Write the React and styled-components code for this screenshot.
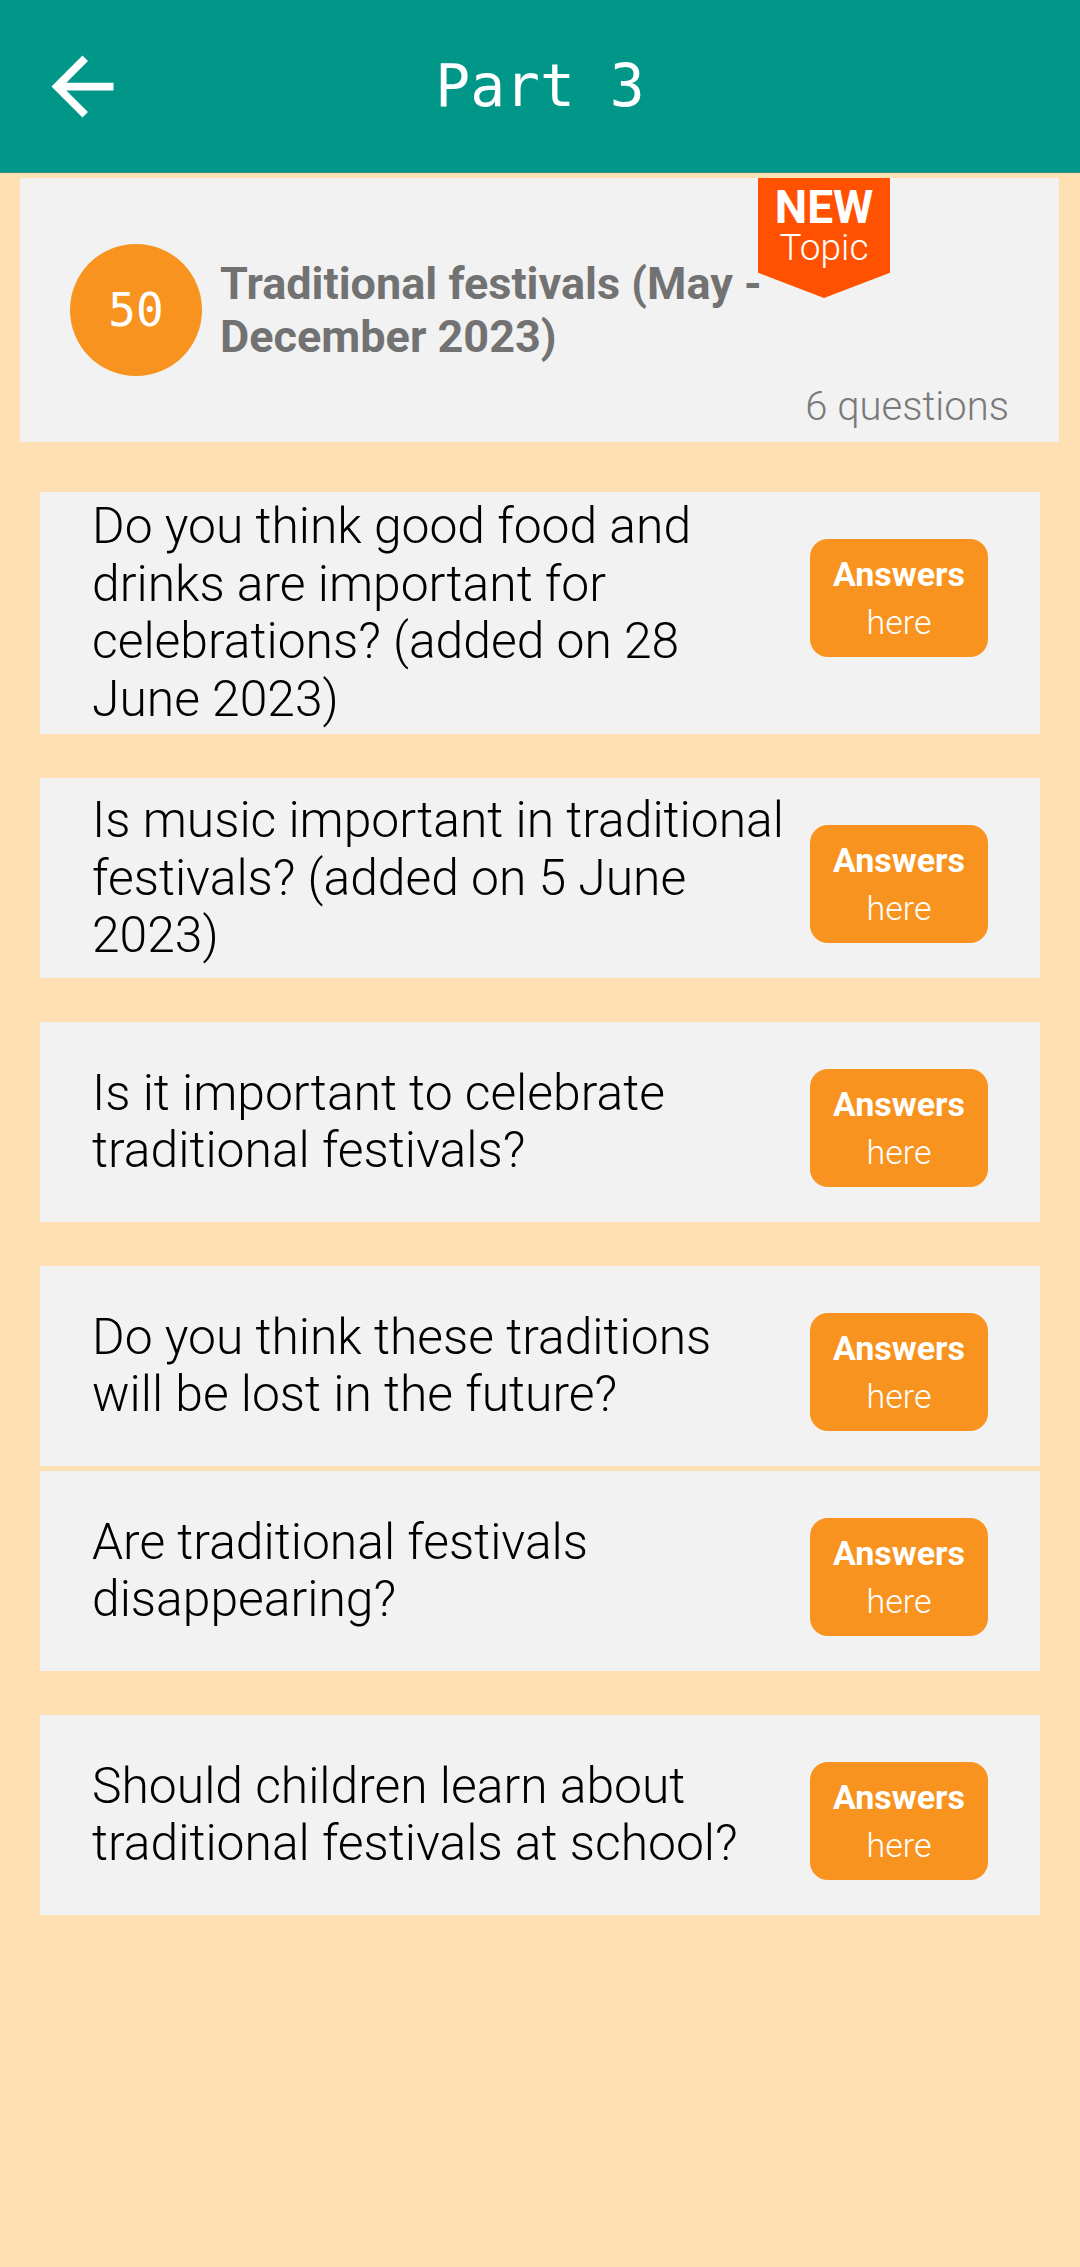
import React from "react";
import styled, { createGlobalStyle } from "styled-components";

const GlobalStyle = createGlobalStyle`
  body {
    margin: 0;
    background-color: #ffe0b2;
    font-family: Roboto, "Noto Sans", sans-serif;
  }
`;

const Page = styled.div`
  min-height: 2267px;
  background-color: #ffe0b2;
  display: flex;
  flex-direction: column;
`;

const Header = styled.header`
  height: 172px;
  background-color: #009688;
  border-bottom: 1px solid #3a8a7d;
  display: grid;
  grid-template-columns: 170px 1fr 170px;
  align-items: center;
`;

const BackButton = styled.button`
  background: none;
  border: none;
  padding: 0;
  margin-left: 36px;
  width: 93px;
  height: 93px;
  display: flex;
  cursor: pointer;
`;

const Title = styled.h1`
  margin: 0;
  text-align: center;
  color: #ffffff;
  font-family: "DejaVu Sans Mono", monospace;
  font-weight: 400;
  font-size: 58px;
`;

const Content = styled.main`
  display: flex;
  flex-direction: column;
  padding-top: 5px;
`;

const TopicCard = styled.section`
  position: relative;
  margin: 0 21px 0 20px;
  height: 264px;
  background-color: #f2f2f2;
  display: flex;
  align-items: center;
  padding-left: 50px;
  gap: 18px;
`;

const NumberCircle = styled.div`
  width: 132px;
  height: 132px;
  flex-shrink: 0;
  border-radius: 50%;
  background-color: #f7931e;
  color: #ffffff;
  display: flex;
  align-items: center;
  justify-content: center;
  font-family: "DejaVu Sans Mono", monospace;
  font-size: 46px;
`;

const TopicTitle = styled.h2`
  margin: 0;
  max-width: 560px;
  color: #727272;
  font-family: Roboto, sans-serif;
  font-weight: 700;
  font-size: 45px;
  line-height: 53px;
`;

const NewBadge = styled.div`
  position: absolute;
  top: 0;
  left: 738px;
  width: 132px;
  height: 120px;
  background-color: #ff5100;
  clip-path: polygon(0 0, 100% 0, 100% 79%, 50% 100%, 0 79%);
  display: flex;
  flex-direction: column;
  align-items: center;
  padding-top: 7px;
  box-sizing: border-box;
  color: #ffffff;
  font-family: Roboto, sans-serif;
`;

const BadgeStrong = styled.span`
  font-size: 46px;
  line-height: 45px;
  font-weight: 700;
`;

const BadgeLight = styled.span`
  font-size: 37px;
  line-height: 36px;
  font-weight: 300;
`;

const QuestionCount = styled.span`
  position: absolute;
  right: 50px;
  bottom: 12px;
  color: #7a7a7a;
  font-family: Roboto, sans-serif;
  font-weight: 300;
  font-size: 40px;
`;

const QuestionList = styled.div`
  display: flex;
  flex-direction: column;
  padding-top: 50px;
`;

const QuestionCard = styled.article`
  margin: ${(props) => (props.tight ? "5px" : "44px")} 40px 0;
  &:first-child {
    margin-top: 0;
  }
  min-height: 200px;
  box-sizing: border-box;
  background-color: #f2f2f2;
  display: flex;
  align-items: center;
  padding: 6px 52px;
  gap: 25px;
`;

const QuestionText = styled.p`
  flex: 1;
  margin: 0;
  color: #000000;
  font-family: Roboto, sans-serif;
  font-weight: 300;
  font-size: 49.8px;
  line-height: 57.6px;
`;

const AnswerButton = styled.button`
  align-self: flex-start;
  margin-top: 41px;
  flex-shrink: 0;
  width: 178px;
  height: 118px;
  border: none;
  border-radius: 18px;
  background-color: #f7931e;
  color: #ffffff;
  display: flex;
  flex-direction: column;
  align-items: center;
  justify-content: center;
  font-family: Roboto, sans-serif;
  font-size: 34px;
  line-height: 48px;
  cursor: pointer;
`;

const AnswerStrong = styled.span`
  font-weight: 700;
`;

const AnswerLight = styled.span`
  font-weight: 300;
`;

const ArrowBack = () => (
  <svg width="93" height="93" viewBox="0 0 24 24" fill="#ffffff">
    <path d="M20 11H7.83l5.59-5.59L12 4l-8 8 8 8 1.41-1.41L7.83 13H20v-2z" />
  </svg>
);

const questions = [
  {
    text: "Do you think good food and drinks are important for celebrations? (added on 28 June 2023)",
  },
  {
    text: "Is music important in traditional festivals? (added on 5 June 2023)",
  },
  { text: "Is it important to celebrate traditional festivals?" },
  { text: "Do you think these traditions will be lost in the future?" },
  { text: "Are traditional festivals disappearing?", tight: true },
  { text: "Should children learn about traditional festivals at school?" },
];

const App = () => {
  return (
    <Page>
      <GlobalStyle />
      <Header>
        <BackButton aria-label="Back">
          <ArrowBack />
        </BackButton>
        <Title>Part 3</Title>
        <div />
      </Header>
      <Content>
        <TopicCard>
          <NumberCircle>50</NumberCircle>
          <TopicTitle>Traditional festivals (May - December 2023)</TopicTitle>
          <NewBadge>
            <BadgeStrong>NEW</BadgeStrong>
            <BadgeLight>Topic</BadgeLight>
          </NewBadge>
          <QuestionCount>6 questions</QuestionCount>
        </TopicCard>
        <QuestionList>
          {questions.map((q) => (
            <QuestionCard key={q.text} tight={q.tight}>
              <QuestionText>{q.text}</QuestionText>
              <AnswerButton>
                <AnswerStrong>Answers</AnswerStrong>
                <AnswerLight>here</AnswerLight>
              </AnswerButton>
            </QuestionCard>
          ))}
        </QuestionList>
      </Content>
    </Page>
  );
};

export default App;
